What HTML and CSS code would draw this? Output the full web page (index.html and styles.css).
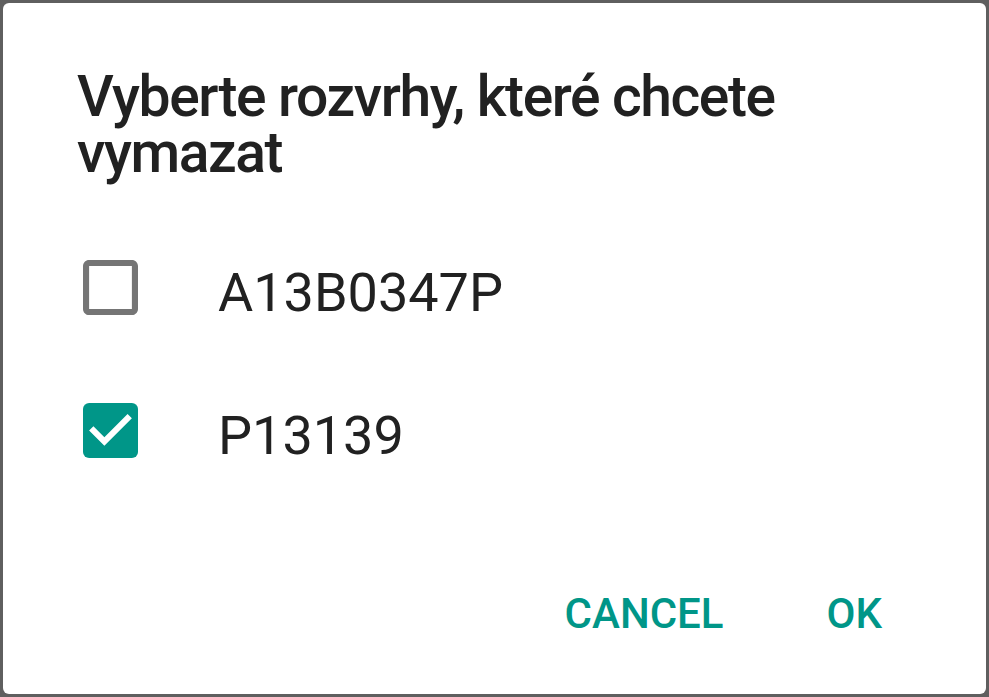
FILE: index.html
```html
<!DOCTYPE html>
<html lang="cs">
<head>
<meta charset="utf-8">
<title>Dialog</title>
<link rel="stylesheet" href="styles.css">
</head>
<body>
<div class="dialog">
  <h1 class="title">Vyberte rozvrhy, které chcete vymazat</h1>
  <ul class="list">
    <li class="row">
      <svg class="box" viewBox="3 3 18 18" aria-hidden="true"><path fill="#757575" d="M19 5v14H5V5h14m0-2H5c-1.11 0-2 .9-2 2v14c0 1.1.89 2 2 2h14c1.1 0 2-.9 2-2V5c0-1.1-.9-2-2-2z"/></svg>
      <span class="label">A13B0347P</span>
    </li>
    <li class="row">
      <svg class="box" viewBox="3 3 18 18" aria-hidden="true"><rect x="3" y="3" width="18" height="18" rx="2" fill="#009688"/><path fill="#fff" d="M10 17l-5-5 1.41-1.41L10 14.17l7.59-7.59L19 8l-9 9z"/></svg>
      <span class="label">P13139</span>
    </li>
  </ul>
  <div class="actions">
    <span class="btn">CANCEL</span>
    <span class="btn">OK</span>
  </div>
</div>
</body>
</html>
```

FILE: styles.css
```css
html, body {
  margin: 0;
  padding: 0;
}
body {
  background: #5f5f5f;
  width: 989px;
  height: 697px;
  overflow: hidden;
  font-family: Roboto, "Noto Sans", sans-serif;
}
.dialog {
  margin: 3px;
  height: 691px;
  background: #ffffff;
  border-radius: 6px;
  display: flex;
  flex-direction: column;
  box-sizing: border-box;
}
.title {
  margin: 0;
  padding: 66px 100px 0 74px;
  font-size: 57px;
  line-height: 56px;
  font-weight: 500;
  letter-spacing: -1.4px;
  color: #212121;
}
.list {
  list-style: none;
  margin: 35px 0 0;
  padding: 0;
}
.row {
  height: 143px;
  display: flex;
  align-items: center;
  padding-left: 80px;
}
.box {
  width: 55px;
  height: 55px;
  flex: none;
}
.label {
  margin-left: 80px;
  padding-top: 9px;
  font-size: 54px;
  color: #212121;
}
.actions {
  margin-top: 87px;
  display: flex;
  justify-content: flex-end;
  gap: 103px;
  padding-right: 104px;
}
.btn {
  font-size: 42px;
  line-height: 50px;
  font-weight: 500;
  color: #009688;
}
```
